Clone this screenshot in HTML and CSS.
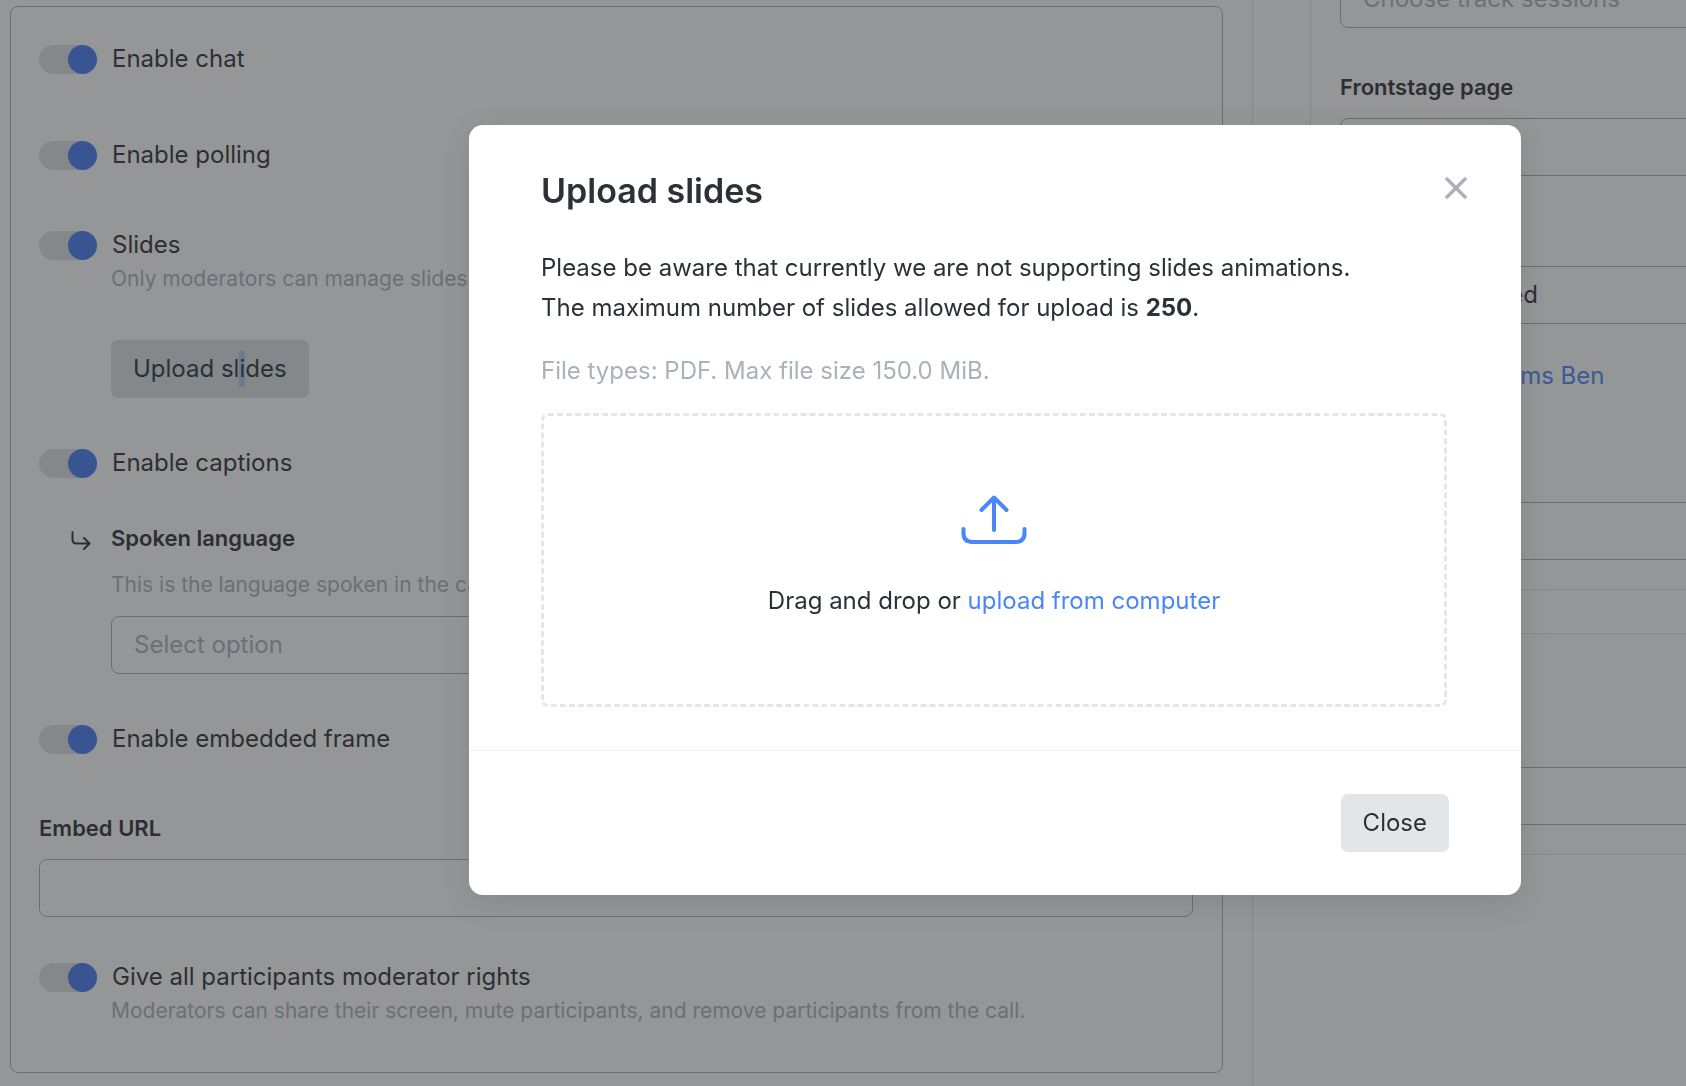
FILE: index.html
```html
<!DOCTYPE html>
<html lang="en">
<head>
    <meta charset="UTF-8">
    <meta name="viewport" content="width=device-width, initial-scale=1.0">
    <title>Upload slides</title>
    <link rel="stylesheet" href="styles.css">
</head>
<body>

<div class="page">
    <main class="main">
        <form class="panel">
            <div class="toggle-row">
                <input type="checkbox" class="toggle" id="chat" checked>
                <label for="chat">Enable chat</label>
            </div>
            <div class="toggle-row polling">
                <input type="checkbox" class="toggle" id="polling" checked>
                <label for="polling">Enable polling</label>
            </div>

            <div class="toggle-row slides">
                <input type="checkbox" class="toggle" id="slides" checked>
                <label for="slides">Slides</label>
            </div>
            <div class="indent">
                <p class="help">Only moderators can manage slides</p>
                <button type="button" class="btn btn-upload">Upload sl<span class="selected">i</span>des</button>
            </div>

            <div class="toggle-row after-field">
                <input type="checkbox" class="toggle" id="captions" checked>
                <label for="captions">Enable captions</label>
            </div>
            <div class="indent language">
                <svg class="sub-arrow" width="20" height="20" viewBox="0 0 20 20" fill="none" stroke="currentColor" stroke-width="2" stroke-linecap="round" stroke-linejoin="round">
                    <path d="M1.5 1v7.500q0 4 4 4H18M13 7l5.500 5.500L13 18"/>
                </svg>
                <label class="title" for="language">Spoken language</label>
                <p class="help">This is the language spoken in the call</p>
                <select class="field placeholder" id="language">
                    <option>Select option</option>
                </select>
            </div>

            <div class="toggle-row after-field">
                <input type="checkbox" class="toggle" id="frame" checked>
                <label for="frame">Enable embedded frame</label>
            </div>
            <div class="embed">
                <label class="title" for="embedUrl">Embed URL</label>
                <input type="text" class="field" id="embedUrl">
            </div>

            <div class="toggle-row rights">
                <input type="checkbox" class="toggle" id="rights" checked>
                <label for="rights">Give all participants moderator rights</label>
            </div>
            <div class="indent">
                <p class="help">Moderators can share their screen, mute participants, and remove participants from the call.</p>
            </div>
        </form>
    </main>

    <aside class="side">
        <section class="card card-first">
            <select class="field placeholder" aria-label="Track sessions">
                <option>Choose track sessions</option>
            </select>
            <label class="title" for="frontstage">Frontstage page</label>
            <input type="text" class="field" id="frontstage">
            <select class="field field-status" aria-label="Status">
                <option>Page published</option>
            </select>
            <a href="#" class="speaker">Speakers: Williams Ben</a>
            <input type="text" class="field field-last" aria-label="Speakers">
        </section>
        <section class="card card-second">
            <input type="text" class="field field-last" aria-label="Tags">
        </section>
    </aside>
</div>

<div class="overlay">
    <div class="modal" role="dialog" aria-modal="true" aria-labelledby="modalTitle">
        <div class="modal-body">
            <header class="modal-header">
                <h2 id="modalTitle">Upload slides</h2>
                <button type="button" class="btn-x" aria-label="Close dialog">
                    <svg width="22" height="22" viewBox="0 0 22 22" stroke="currentColor" stroke-width="3.500" stroke-linecap="round">
                        <path d="M2 2l18 18M20 2L2 20"/>
                    </svg>
                </button>
            </header>
            <p>Please be aware that currently we are not supporting slides animations.<br>
                The maximum number of slides allowed for upload is <strong>250</strong>.</p>
            <p class="file-types">File types: PDF. Max file size 150.0 MiB.</p>
            <div class="dropzone">
                <svg width="66" height="50" viewBox="0 0 66 50" fill="none" stroke="currentColor" stroke-width="4" stroke-linecap="round" stroke-linejoin="round">
                    <path d="M33 35V3M20.500 15L33 2.500L45.500 15"/>
                    <path d="M2.500 34v4q0 9 9 9h43q9 0 9-9v-4"/>
                </svg>
                <p>Drag and drop or <a href="#">upload from computer</a></p>
            </div>
        </div>
        <footer class="modal-footer">
            <button type="button" class="btn">Close</button>
        </footer>
    </div>
</div>

</body>
</html>
```
FILE: styles.css
```css
* {
    box-sizing: border-box;
}

body {
    margin: 0;
    height: 100vh;
    overflow: hidden;
    background-color: #fff;
    font-family: Inter, "Liberation Sans", sans-serif;
    font-size: 24px;
    line-height: 36px;
    color: #2b3137;
}

p, h2 {
    margin: 0;
}

a {
    color: #4a86f7;
    text-decoration: none;
}

/* page behind the dialog */
.page {
    display: flex;
    min-height: 100vh;
}

.main {
    flex: 1;
    min-width: 0;
    padding: 6px 29px 13px 10px;
    border-right: 1px solid #e2e4e6;
}

.panel {
    padding: 34px 29px 45px 28px;
    border: 1px solid #aab0b9;
    border-radius: 8px;
}

.toggle-row {
    display: flex;
    align-items: center;
    gap: 15px;
}

.polling {
    margin-top: 60px;
}

.slides {
    margin-top: 54px;
}

.after-field {
    margin-top: 47px;
}

.rights {
    margin-top: 42px;
}

.toggle {
    appearance: none;
    display: flex;
    justify-content: flex-end;
    width: 58px;
    height: 29px;
    margin: 0;
    border-radius: 15px;
    background-color: #dce2e4;
}

.toggle::before {
    content: "";
    width: 29px;
    height: 29px;
    border-radius: 50%;
    background-color: #447cf3;
}

.indent {
    margin-left: 72px;
}

.help {
    font-size: 21px;
    line-height: 32px;
    color: #aab2bb;
}

.title {
    display: block;
    font-size: 22px;
    font-weight: 600;
    line-height: 32px;
}

.btn {
    height: 58px;
    padding: 0 22px;
    border: none;
    border-radius: 7px;
    background-color: #e4e5e7;
    font: inherit;
    color: inherit;
    cursor: pointer;
}

.btn-upload {
    display: block;
    margin-top: 45px;
    background-color: #dce2e4;
}

.selected {
    display: inline-block;
    background-color: #aac6f3;
}

.language {
    position: relative;
    margin-top: 41px;
}

.language .help {
    margin: 15px 0;
}

.sub-arrow {
    position: absolute;
    top: 9px;
    left: -40px;
}

.field {
    appearance: none;
    display: block;
    width: 100%;
    height: 58px;
    padding: 0 22px;
    border: 1px solid #aab0b9;
    border-radius: 8px;
    background-color: transparent;
    font: inherit;
    color: inherit;
}

.placeholder {
    color: #aab2bb;
}

.embed {
    margin-top: 55px;
}

.title + .field {
    margin-top: 15px;
}

.side {
    width: 433px;
}

/* cards run on past the right edge of the window */
.card {
    margin: 0 -40px 43px 57px;
    padding: 0 29px 29px;
    border: 1px solid #e2e4e6;
}

.card-first {
    margin-top: -31px;
}

.card-first .title {
    margin-top: 43px;
}

.field-status {
    margin-top: 90px;
}

.speaker {
    display: block;
    margin-top: 34px;
}

.card-first .field-last {
    margin-top: 108px;
}

.card-second .field-last {
    margin-top: 133px;
}

/* dialog */
.overlay {
    position: fixed;
    inset: 0;
    display: flex;
    align-items: flex-start;
    justify-content: flex-end;
    padding: 125px 165px 0;
    background-color: rgba(44, 46, 49, 0.5);
}

.modal {
    width: 100%;
    max-width: 1052px;
    border-radius: 14px;
    background-color: #fff;
    box-shadow: 0 8px 32px rgba(0, 0, 0, 0.1);
    line-height: 40px;
}

.modal-body {
    padding: 44px 74px 43px 72px;
}

.modal-header {
    display: flex;
    align-items: flex-start;
    justify-content: space-between;
    margin-bottom: 35px;
}

.modal-header h2 {
    font-size: 34px;
    font-weight: 600;
    line-height: 44px;
}

.btn-x {
    display: flex;
    margin: 0 -28px 0 0;
    padding: 8px;
    border: none;
    background: none;
    color: #a9b1ba;
    cursor: pointer;
}

.file-types {
    margin: 23px 0 22px;
    color: #a9b1ba;
}

.dropzone {
    display: flex;
    flex-direction: column;
    align-items: center;
    gap: 36px;
    padding: 79px 20px 83px;
    border: 3px dashed #e5e6e7;
    border-radius: 7px;
}

.dropzone svg {
    color: #4a86f7;
}

.modal-footer {
    display: flex;
    justify-content: flex-end;
    padding: 43px 72px;
    border-top: 1px solid #eeeff0;
}
```
